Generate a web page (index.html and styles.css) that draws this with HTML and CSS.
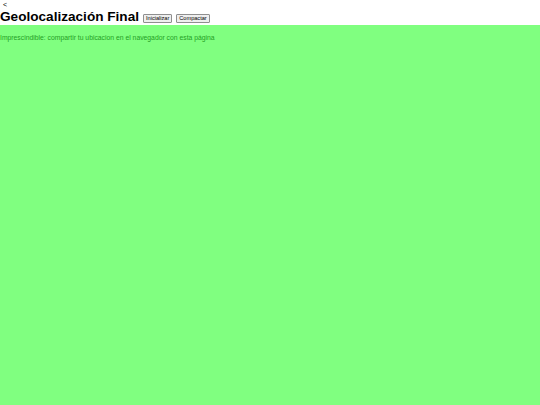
FILE: index.html
```html
<!DOCTYPE html>
<html lang="es">
<head>
<meta charset="utf-8">
<title>Geolocalización Final</title>
<link rel="stylesheet" href="styles.css">
</head>
<body>
<header class="top">
  <a class="back" href="#">&lt;</a>
  <div class="titlebar">
    <h1 class="title">Geolocalización Final</h1>
    <button class="btn">Inicializar</button>
    <button class="btn">Compactar</button>
  </div>
</header>
<main class="map">
  <p class="msg">Imprescindible: compartir tu ubicacion en el navegador con esta página</p>
</main>
</body>
</html>
```
FILE: styles.css
```css
html, body {
  margin: 0;
  padding: 0;
  height: 100%;
}
body {
  font-family: "Liberation Sans", Arial, sans-serif;
  font-size: 7px;
  display: flex;
  flex-direction: column;
  background: #ffffff;
}
.top {
  padding: 0;
}
.back {
  display: block;
  color: #000;
  text-decoration: none;
  font-size: 7px;
  line-height: 9px;
  padding-left: 3px;
}
.titlebar {
  display: flex;
  align-items: center;
  gap: 4px;
  height: 16px;
}
.title {
  margin: 0;
  font-size: 13.6px;
  line-height: 16px;
  font-weight: bold;
  color: #000;
}
.btn {
  font-family: "Liberation Sans", Arial, sans-serif;
  font-size: 5.6px;
  line-height: 7px;
  padding: 0 2px;
  margin: 2px 0 0 0;
  background: #efefef;
  border: 1px solid #8f8f8f;
  border-radius: 1px;
  color: #000;
}
.map {
  flex: 1;
  background: #80ff80;
}
.msg {
  margin: 8px 0;
  color: #25a025;
  font-size: 6.8px;
  line-height: 9px;
}
```
